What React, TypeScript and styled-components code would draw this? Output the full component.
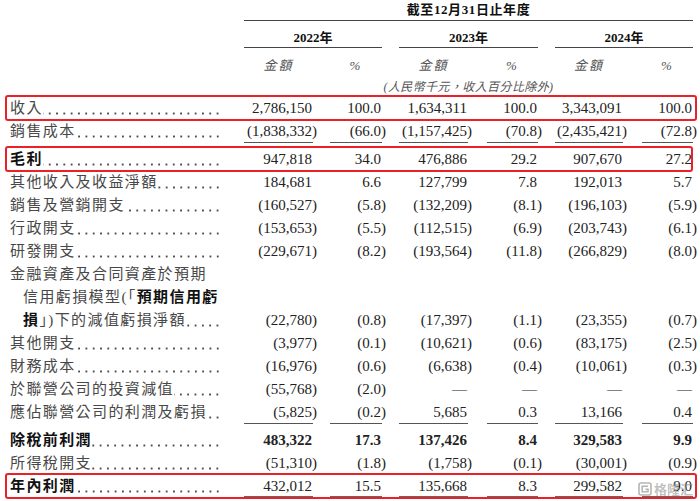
import React from 'react';
import styled, { createGlobalStyle, css } from 'styled-components';

const GlobalStyle = createGlobalStyle`
  html, body { margin: 0; padding: 0; background: #fff; }
  body { font-family: "Liberation Serif", "Noto Sans CJK TC", serif; color: #222; }
`;

const COLS = '244px 69px 69px 86px 70px 85px 70px 7px';
const PADS = [0, 17, 17, 19, 17, 19];

const Page = styled.div`
  position: relative;
  width: 700px;
  height: 501px;
  overflow: hidden;
  background: #fff;
`;

const HeaderGrid = styled.div`
  display: grid;
  grid-template-columns: ${COLS};
`;

const Title = styled.div`
  grid-column: 2 / 8;
  height: 20px;
  line-height: 20px;
  text-align: center;
  font-size: 13px;
  font-weight: 700;
  letter-spacing: 0.6px;
  color: #111;
  border-bottom: 1px solid #444;
`;

const YearCell = styled.div<{ $pl: number; $col: string }>`
  grid-column: ${(p) => p.$col};
  padding-left: ${(p) => p.$pl}px;
`;

const YearLabel = styled.div`
  padding-top: 10px;
  padding-bottom: 2px;
  line-height: 14px;
  text-align: center;
  font-size: 13px;
  font-weight: 700;
  color: #111;
  border-bottom: 1px solid #444;
`;

const UnitCell = styled.div<{ $pl: number; $col: number }>`
  grid-column: ${(p) => p.$col};
  padding-left: ${(p) => p.$pl}px;
  padding-top: 6px;
  height: 29px;
  box-sizing: border-box;
  line-height: 23px;
  text-align: center;
  font-size: 13px;
  font-style: italic;
  letter-spacing: 2px;
  color: #555;
`;

const Note = styled.div`
  grid-column: 2 / 8;
  height: 20px;
  line-height: 20px;
  text-align: center;
  font-size: 12px;
  font-style: italic;
  letter-spacing: 0.4px;
  color: #555;
`;

const Row = styled.div<{ $gap: boolean; $box?: number }>`
  position: relative;
  display: grid;
  grid-template-columns: ${COLS};
  height: 23px;
  margin-bottom: ${(p) => (p.$gap ? 5 : 0)}px;
  ${(p) =>
    p.$box !== undefined &&
    css`
      &::after {
        content: '';
        position: absolute;
        left: 5px;
        right: ${700 - p.$box}px;
        top: -2px;
        bottom: -1px;
        border: 2px solid #ec2027;
        border-radius: 3px;
        pointer-events: none;
      }
    `}
`;

const Label = styled.div<{ $indent: boolean; $bold: boolean }>`
  display: flex;
  padding-left: ${(p) => (p.$indent ? 23 : 10)}px;
  padding-right: 22px;
  min-width: 0;
  font-size: 15px;
  line-height: 23px;
  letter-spacing: 1.4px;
  white-space: nowrap;
  color: ${(p) => (p.$bold ? '#111' : '#484848')};
  font-weight: ${(p) => (p.$bold ? 700 : 400)};
`;

const Strong = styled.span`
  font-weight: 700;
  color: #111;
`;

const Leader = styled.span`
  flex: 1;
  min-width: 0;
  height: 23px;
  background-image: radial-gradient(circle, #4a4a4a 0.85px, transparent 1.3px);
  background-size: 7.3px 3px;
  background-repeat: repeat-x;
  background-position: right 1px top 15px;
`;

const ValueCell = styled.div<{ $pl: number }>`
  padding-left: ${(p) => p.$pl}px;
`;

const Value = styled.div<{ $line?: 'single' | 'double'; $bold: boolean }>`
  height: 23px;
  box-sizing: border-box;
  line-height: 23px;
  padding-right: 1px;
  text-align: right;
  font-size: 15px;
  white-space: nowrap;
  color: #222;
  font-weight: ${(p) => (p.$bold ? 700 : 400)};
  border-bottom: ${(p) =>
    p.$line === 'single' ? '1px solid #555' : p.$line === 'double' ? '2px solid #666' : 'none'};
`;

const Paren = styled.span`
  margin-right: -5px;
`;

const Watermark = styled.div`
  position: absolute;
  right: 7px;
  bottom: 4px;
  display: flex;
  align-items: center;
  gap: 2px;
  font-family: "Noto Sans CJK SC", sans-serif;
  font-size: 13px;
  font-weight: 700;
  line-height: 16px;
  color: rgba(150, 150, 150, 0.6);
  pointer-events: none;
`;

type Piece = string | { b: string };

interface RowData {
  label: Piece[];
  values?: string[];
  bold?: 'label' | 'all';
  indent?: boolean;
  leader?: boolean;
  line?: 'single' | 'double';
  box?: number;
}

const rows: RowData[] = [
  { label: ['收入'], values: ['2,786,150', '100.0', '1,634,311', '100.0', '3,343,091', '100.0'], box: 697 },
  { label: ['銷售成本 '], values: ['(1,838,332)', '(66.0)', '(1,157,425)', '(70.8)', '(2,435,421)', '(72.8)'], line: 'single' },
  { label: ['毛利'], bold: 'label', values: ['947,818', '34.0', '476,886', '29.2', '907,670', '27.2'], box: 693 },
  { label: ['其他收入及收益淨額 '], values: ['184,681', '6.6', '127,799', '7.8', '192,013', '5.7'] },
  { label: ['銷售及營銷開支'], values: ['(160,527)', '(5.8)', '(132,209)', '(8.1)', '(196,103)', '(5.9)'] },
  { label: ['行政開支 '], values: ['(153,653)', '(5.5)', '(112,515)', '(6.9)', '(203,743)', '(6.1)'] },
  { label: ['研發開支 '], values: ['(229,671)', '(8.2)', '(193,564)', '(11.8)', '(266,829)', '(8.0)'] },
  { label: ['金融資產及合同資產於預期'], leader: false },
  { label: ['信用虧損模型(「', { b: '預期信用虧' }], leader: false, indent: true },
  { label: [{ b: '損' }, '」)下的減值虧損淨額'], indent: true, values: ['(22,780)', '(0.8)', '(17,397)', '(1.1)', '(23,355)', '(0.7)'] },
  { label: ['其他開支 '], values: ['(3,977)', '(0.1)', '(10,621)', '(0.6)', '(83,175)', '(2.5)'] },
  { label: ['財務成本 '], values: ['(16,976)', '(0.6)', '(6,638)', '(0.4)', '(10,061)', '(0.3)'] },
  { label: ['於聯營公司的投資減值 '], values: ['(55,768)', '(2.0)', '—', '—', '—', '—'] },
  { label: ['應佔聯營公司的利潤及虧損'], values: ['(5,825)', '(0.2)', '5,685', '0.3', '13,166', '0.4'], line: 'single' },
  { label: ['除稅前利潤 '], bold: 'all', values: ['483,322', '17.3', '137,426', '8.4', '329,583', '9.9'] },
  { label: ['所得稅開支 '], values: ['(51,310)', '(1.8)', '(1,758)', '(0.1)', '(30,001)', '(0.9)'] },
  { label: ['年內利潤 '], bold: 'label', values: ['432,012', '15.5', '135,668', '8.3', '299,582', '9.0'], line: 'double', box: 697 },
];

function Num({ text }: { text: string }) {
  if (text.startsWith('(') && text.endsWith(')')) {
    return (
      <>
        {text.slice(0, -1)}
        <Paren>)</Paren>
      </>
    );
  }
  return <>{text}</>;
}

function WatermarkIcon() {
  return (
    <svg width="14" height="14" viewBox="0 0 14 14" fill="none">
      <rect x="1" y="1" width="12" height="12" rx="2" stroke="rgba(150,150,150,0.7)" strokeWidth="1.6" />
      <path d="M10 4.2H4.2V9.8H10V7.2H7.4" stroke="rgba(150,150,150,0.7)" strokeWidth="1.6" />
    </svg>
  );
}

export default function App() {
  return (
    <Page>
      <GlobalStyle />
      <HeaderGrid>
        <Title>截至12月31日止年度</Title>
        <YearCell $col="2 / 4" $pl={0}>
          <YearLabel>2022年</YearLabel>
        </YearCell>
        <YearCell $col="4 / 6" $pl={17}>
          <YearLabel>2023年</YearLabel>
        </YearCell>
        <YearCell $col="6 / 8" $pl={17}>
          <YearLabel>2024年</YearLabel>
        </YearCell>
        {PADS.map((pl, i) => (
          <UnitCell key={i} $col={i + 2} $pl={pl}>
            {i % 2 === 0 ? '金額' : '%'}
          </UnitCell>
        ))}
        <Note>(人民幣千元，收入百分比除外)</Note>
      </HeaderGrid>
      {rows.map((r, ri) => (
        <Row key={ri} $gap={r.line === 'single'} $box={r.box}>
          <Label $indent={!!r.indent} $bold={!!r.bold}>
            <span>
              {r.label.map((p, pi) =>
                typeof p === 'string' ? <React.Fragment key={pi}>{p}</React.Fragment> : <Strong key={pi}>{p.b}</Strong>
              )}
            </span>
            {r.leader !== false && <Leader />}
          </Label>
          {PADS.map((pl, ci) => (
            <ValueCell key={ci} $pl={pl}>
              {r.values && (
                <Value $line={r.line} $bold={r.bold === 'all'}>
                  <Num text={r.values[ci]} />
                </Value>
              )}
            </ValueCell>
          ))}
        </Row>
      ))}
      <Watermark>
        <WatermarkIcon />
        <span>格隆汇</span>
      </Watermark>
    </Page>
  );
}
